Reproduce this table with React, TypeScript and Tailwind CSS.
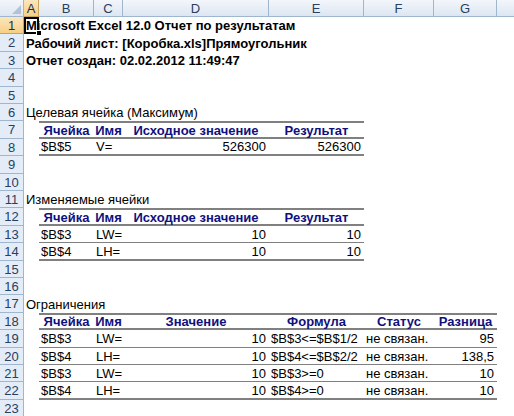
const COLS = [
    { id: "A", w: "w-[15px]" },
    { id: "B", w: "w-[55px]" },
    { id: "C", w: "w-[29px]" },
    { id: "D", w: "w-[146px]" },
    { id: "E", w: "w-[95px]" },
    { id: "F", w: "w-[70px]" },
    { id: "G", w: "w-[63px]" },
]

// row heights alternate a little (sheet is scaled ~0.87)
const HEIGHTS = [17, 18, 17, 18, 17, 17, 18, 17, 18, 17, 17, 18, 17, 18, 17, 17, 18, 17, 18, 17, 17, 18, 17]

type Align = "l" | "r" | "c"

type RowDef =
    | { kind: "title"; text: string; bold?: boolean }
    | { kind: "table"; span: number; head?: boolean; last?: boolean; cells: string[]; aligns?: Align[] }

const HEAD_SHORT = ["Ячейка", "Имя", "Исходное значение", "Результат"]
const HEAD_LONG = ["Ячейка", "Имя", "Значение", "Формула", "Статус", "Разница"]
const A4: Align[] = ["l", "l", "r", "r"]
const A6: Align[] = ["l", "l", "r", "l", "l", "r"]

const ROWS: Record<number, RowDef> = {
    1: { kind: "title", text: "Microsoft Excel 12.0 Отчет по результатам", bold: true },
    2: { kind: "title", text: "Рабочий лист: [Коробка.xls]Прямоугольник", bold: true },
    3: { kind: "title", text: "Отчет создан: 02.02.2012 11:49:47", bold: true },
    6: { kind: "title", text: "Целевая ячейка (Максимум)" },
    7: { kind: "table", span: 4, head: true, cells: HEAD_SHORT },
    8: { kind: "table", span: 4, last: true, cells: ["$B$5", "V=", "526300", "526300"], aligns: A4 },
    11: { kind: "title", text: "Изменяемые ячейки" },
    12: { kind: "table", span: 4, head: true, cells: HEAD_SHORT },
    13: { kind: "table", span: 4, cells: ["$B$3", "LW=", "10", "10"], aligns: A4 },
    14: { kind: "table", span: 4, last: true, cells: ["$B$4", "LH=", "10", "10"], aligns: A4 },
    17: { kind: "title", text: "Ограничения" },
    18: { kind: "table", span: 6, head: true, cells: HEAD_LONG },
    19: { kind: "table", span: 6, cells: ["$B$3", "LW=", "10", "$B$3<=$B$1/2", "не связан.", "95"], aligns: A6 },
    20: { kind: "table", span: 6, cells: ["$B$4", "LH=", "10", "$B$4<=$B$2/2", "не связан.", "138,5"], aligns: A6 },
    21: { kind: "table", span: 6, cells: ["$B$3", "LW=", "10", "$B$3>=0", "не связан.", "10"], aligns: A6 },
    22: { kind: "table", span: 6, last: true, cells: ["$B$4", "LH=", "10", "$B$4>=0", "не связан.", "10"], aligns: A6 },
}

function ColumnHeader() {
    return (
        <div className="flex h-[17px] shrink-0">
            <div className="relative w-[24px] shrink-0 border-r border-b border-[#9eb6ce] bg-gradient-to-b from-[#f3f6fb] to-[#dde6f1]">
                <div className="absolute right-[2px] bottom-[2px] w-0 h-0 border-l-[9px] border-l-transparent border-b-[9px] border-b-[#b3c3d7]" />
            </div>
            {COLS.map(c => (
                <div key={c.id}
                    className={`${c.w} shrink-0 flex items-center justify-center border-r border-b text-[13px] leading-none ${c.id === "A"
                        ? "bg-gradient-to-b from-[#fce6bd] to-[#f6cf85] border-[#c9a35c] text-[#1d2f4a]"
                        : "bg-gradient-to-b from-[#f3f6fb] to-[#dde6f1] border-[#9eb6ce] text-[#27415f]"}`}>
                    {c.id}
                </div>
            ))}
            <div className="flex-1 border-b border-[#9eb6ce] bg-gradient-to-b from-[#f3f6fb] to-[#dde6f1]" />
        </div>
    )
}

function TableCells({ row }: { row: Extract<RowDef, { kind: "table" }> }) {
    return (
        <>
            {COLS.slice(1).map((c, i) => {
                const inTable = i < row.span
                const text = inTable ? row.cells[i] : ""
                const align: Align = row.head ? "c" : row.aligns?.[i] ?? "l"
                const border = !inTable
                    ? ""
                    : row.head
                        ? "border-t-2 border-b-2 border-[#808080]"
                        : row.last
                            ? "border-b-2 border-[#808080]"
                            : "border-b border-[#808080]"
                return (
                    <div key={c.id}
                        className={`${c.w} shrink-0 flex items-center whitespace-nowrap text-[13px] ${border} ${align === "r" ? "justify-end pr-[3px]" : align === "c" ? "justify-center" : "justify-start pl-[2px]"} ${row.head ? "font-bold text-[#10107e]" : "text-black"}`}>
                        {text}
                    </div>
                )
            })}
        </>
    )
}

export default function App() {
    return (
        <div className="w-[514px] h-[416px] overflow-hidden bg-white flex flex-col font-['Liberation_Sans',Arial,sans-serif]">
            <ColumnHeader />
            {HEIGHTS.map((h, idx) => {
                const n = idx + 1
                const row = ROWS[n]
                const selected = n === 1
                return (
                    <div key={n} className={`flex shrink-0 ${h === 18 ? "h-[18px]" : "h-[17px]"}`}>
                        <div className={`w-[24px] shrink-0 flex items-center justify-center border-r border-b text-[13px] leading-none ${selected
                            ? "bg-gradient-to-b from-[#fce6bd] to-[#f6cf85] border-[#c9a35c] text-[#1d2f4a]"
                            : "bg-[#e4ecf7] border-[#9eb6ce] text-[#27415f]"}`}>
                            {n}
                        </div>
                        <div className="flex flex-1 leading-none">
                            {/* column A */}
                            <div className="relative w-[15px] shrink-0 flex items-center">
                                {row?.kind === "title" && (
                                    <span className={`pl-[2px] whitespace-nowrap text-[13px] ${row.bold ? "font-bold" : ""}`}>{row.text}</span>
                                )}
                                {selected && (
                                    <>
                                        <div className="absolute inset-0 border-2 border-black pointer-events-none" />
                                        <div className="absolute right-[-3px] bottom-[-2px] w-[6px] h-[6px] bg-black border border-white" />
                                    </>
                                )}
                            </div>
                            {row?.kind === "table" ? <TableCells row={row} /> : null}
                        </div>
                    </div>
                )
            })}
        </div>
    )
}
